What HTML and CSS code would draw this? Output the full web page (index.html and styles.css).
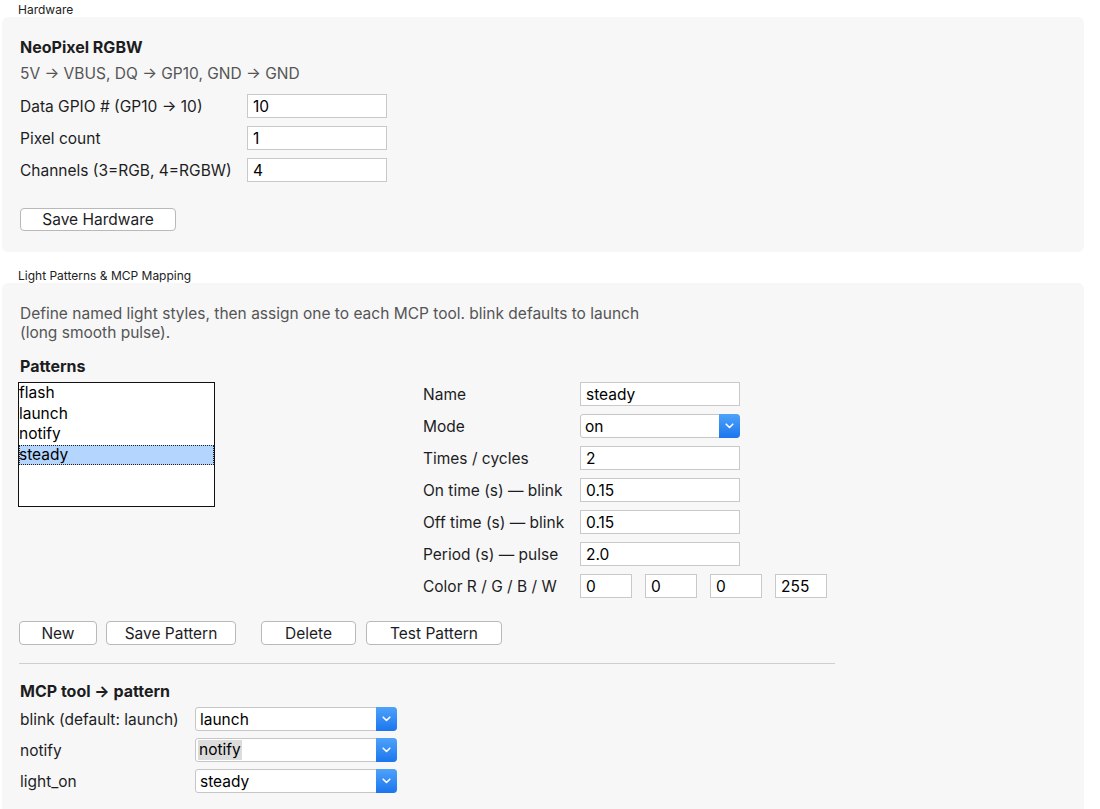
FILE: index.html
```html
<!DOCTYPE html>
<html>
<head>
    <title>NeoPixel Light Control</title>
    <link rel="stylesheet" href="styles.css">
</head>
<body>
    <div class="legend">Hardware</div>
    <section class="panel">
        <h3>NeoPixel RGBW</h3>
        <p class="hint">5V → VBUS, DQ → GP10, GND → GND</p>

        <div class="field hw-field">
            <label for="gpio">Data GPIO # (GP10 → 10)</label>
            <input type="text" id="gpio" value="10">
        </div>
        <div class="field hw-field">
            <label for="pixelCount">Pixel count</label>
            <input type="text" id="pixelCount" value="1">
        </div>
        <div class="field hw-field">
            <label for="channels">Channels (3=RGB, 4=RGBW)</label>
            <input type="text" id="channels" value="4">
        </div>

        <button type="button" class="btn btn-hw">Save Hardware</button>
    </section>

    <div class="legend">Light Patterns &amp; MCP Mapping</div>
    <section class="panel">
        <p class="hint desc">Define named light styles, then assign one to each MCP tool. blink defaults to launch (long smooth pulse).</p>

        <h3 class="patterns-title">Patterns</h3>
        <div class="pattern-editor">
            <ul class="listbox" id="patternList">
                <li>flash</li>
                <li>launch</li>
                <li>notify</li>
                <li class="selected">steady</li>
            </ul>

            <div class="pattern-form">
                <div class="field pf-field">
                    <label for="patName">Name</label>
                    <input type="text" id="patName" value="steady">
                </div>
                <div class="field pf-field">
                    <label for="patMode">Mode</label>
                    <div class="select">
                        <select id="patMode">
                            <option>on</option>
                            <option>blink</option>
                            <option>pulse</option>
                        </select>
                        <span class="arrow"><svg width="9" height="6" viewBox="0 0 9 6"><path d="M1.2 1.2 L4.5 4.5 L7.8 1.2" fill="none" stroke="#fff" stroke-width="1.6" stroke-linecap="round" stroke-linejoin="round"/></svg></span>
                    </div>
                </div>
                <div class="field pf-field">
                    <label for="patTimes">Times / cycles</label>
                    <input type="text" id="patTimes" value="2">
                </div>
                <div class="field pf-field">
                    <label for="patOn">On time (s) — blink</label>
                    <input type="text" id="patOn" value="0.15">
                </div>
                <div class="field pf-field">
                    <label for="patOff">Off time (s) — blink</label>
                    <input type="text" id="patOff" value="0.15">
                </div>
                <div class="field pf-field">
                    <label for="patPeriod">Period (s) — pulse</label>
                    <input type="text" id="patPeriod" value="2.0">
                </div>
                <div class="field pf-field">
                    <label for="colR">Color R / G / B / W</label>
                    <div class="color-inputs">
                        <input type="text" id="colR" value="0">
                        <input type="text" id="colG" value="0">
                        <input type="text" id="colB" value="0">
                        <input type="text" id="colW" value="255">
                    </div>
                </div>
            </div>
        </div>

        <div class="pattern-buttons">
            <button type="button" class="btn btn-new">New</button>
            <button type="button" class="btn btn-savepat">Save Pattern</button>
            <button type="button" class="btn btn-delete">Delete</button>
            <button type="button" class="btn btn-test">Test Pattern</button>
        </div>

        <hr>

        <h3 class="map-title">MCP tool → pattern</h3>
        <div class="field map-field">
            <label for="mapBlink">blink (default: launch)</label>
            <div class="select">
                <select id="mapBlink">
                    <option>flash</option>
                    <option selected>launch</option>
                    <option>notify</option>
                    <option>steady</option>
                </select>
                <span class="arrow"><svg width="9" height="6" viewBox="0 0 9 6"><path d="M1.2 1.2 L4.5 4.5 L7.8 1.2" fill="none" stroke="#fff" stroke-width="1.6" stroke-linecap="round" stroke-linejoin="round"/></svg></span>
            </div>
        </div>
        <div class="field map-field">
            <label for="mapNotify">notify</label>
            <div class="select">
                <select id="mapNotify">
                    <option>flash</option>
                    <option>launch</option>
                    <option selected>notify</option>
                    <option>steady</option>
                </select>
                <span class="picked">notify</span>
                <span class="arrow"><svg width="9" height="6" viewBox="0 0 9 6"><path d="M1.2 1.2 L4.5 4.5 L7.8 1.2" fill="none" stroke="#fff" stroke-width="1.6" stroke-linecap="round" stroke-linejoin="round"/></svg></span>
            </div>
        </div>
        <div class="field map-field">
            <label for="mapLight">light_on</label>
            <div class="select">
                <select id="mapLight">
                    <option>flash</option>
                    <option>launch</option>
                    <option>notify</option>
                    <option selected>steady</option>
                </select>
                <span class="arrow"><svg width="9" height="6" viewBox="0 0 9 6"><path d="M1.2 1.2 L4.5 4.5 L7.8 1.2" fill="none" stroke="#fff" stroke-width="1.6" stroke-linecap="round" stroke-linejoin="round"/></svg></span>
            </div>
        </div>
    </section>
</body>
</html>
```

FILE: styles.css
```css
body {
    margin: 0 16px 0 2px;
    font-family: Inter, "Liberation Sans", sans-serif;
    font-size: 15.5px;
    color: #1d1d1f;
    background: #fff;
}

.legend {
    height: 17px;
    line-height: 19px;
    padding-left: 16px;
    font-size: 12px;
    color: #222;
}

.panel {
    background: #f7f7f7;
    border-radius: 6px;
    padding: 20px 18px 21px;
    margin-bottom: 14px;
}

h3 {
    margin: 0;
    font-size: 16px;
    line-height: 20px;
    font-weight: 700;
}

.hint {
    margin: 7px 0 10px;
    line-height: 20px;
    color: #555;
}

.desc {
    margin: 0;
    padding-top: 1px;
    line-height: 19px;
    max-width: 640px;
}

.field {
    display: flex;
    align-items: center;
    height: 24px;
    margin-bottom: 8px;
}

.field label {
    flex: none;
}

.hw-field label {
    width: 227px;
}

input[type="text"] {
    box-sizing: border-box;
    width: 140px;
    height: 24px;
    margin: 0;
    padding: 0 5px;
    border: 1px solid #c9c9c9;
    background: #fff;
    font-family: inherit;
    font-size: 15.5px;
    color: #000;
}

.btn {
    box-sizing: border-box;
    height: 23px;
    padding: 0;
    border: 1px solid #b9b9b9;
    border-radius: 4px;
    background: #fff;
    font-family: inherit;
    font-size: 15.5px;
    color: #1d1d1f;
}

.btn-hw {
    width: 156px;
    margin-top: 18px;
}

/* patterns */
.patterns-title {
    margin-top: 14px;
}

.pattern-editor {
    display: grid;
    grid-template-columns: 403px 1fr;
    margin-top: 6px;
}

.listbox {
    list-style: none;
    margin: 0 0 0 -2px;
    padding: 0;
    box-sizing: border-box;
    width: 197px;
    height: 125px;
    border: 1px solid #111;
    background: #fff;
    font-size: 15.5px;
    line-height: 20.5px;
    color: #000;
}

.listbox li.selected {
    background: #b4d5fe;
    outline: 1px dotted #222;
    outline-offset: -1px;
}

.pf-field label {
    width: 157px;
}

.pf-field input[type="text"] {
    width: 160px;
}

.pf-field:last-child {
    margin-bottom: 0;
}

.color-inputs {
    display: flex;
    gap: 13px;
}

.color-inputs input[type="text"] {
    width: 52px;
}

.select {
    position: relative;
    width: 160px;
    height: 24px;
}

.select select {
    appearance: none;
    -webkit-appearance: none;
    box-sizing: border-box;
    width: 100%;
    height: 24px;
    margin: 0;
    padding: 0 24px 0 4px;
    border: 1px solid #c6c6c6;
    border-radius: 3px;
    background: #fff;
    font-family: inherit;
    font-size: 15.5px;
    color: #000;
}

.select .arrow {
    position: absolute;
    top: 0;
    right: 0;
    width: 21px;
    height: 24px;
    display: flex;
    align-items: center;
    justify-content: center;
    border-radius: 0 4px 4px 0;
    background: linear-gradient(#4ea2fa, #1b76ee);
}

.select .picked {
    position: absolute;
    top: 2px;
    left: 3px;
    height: 20px;
    line-height: 20px;
    padding: 0 1px;
    background: #dcdcdc;
    color: #000;
    pointer-events: none;
}

.pattern-buttons {
    display: flex;
    margin-top: 23px;
}

.pattern-buttons .btn {
    height: 24px;
}

.btn-new {
    width: 78px;
    margin-left: -1px;
    margin-right: 9px;
}

.btn-savepat {
    width: 130px;
    margin-right: 25px;
}

.btn-delete {
    width: 95px;
    margin-right: 10px;
}

.btn-test {
    width: 136px;
}

hr {
    width: 816px;
    margin: 18px 0 0 -1px;
    border: 0;
    border-top: 1px solid #cfcfcf;
}

/* mapping */
.map-title {
    margin: 17px 0 6px;
}

.map-field {
    margin-bottom: 7px;
}

.map-field label {
    width: 175px;
}

.map-field .select {
    width: 202px;
}
```
